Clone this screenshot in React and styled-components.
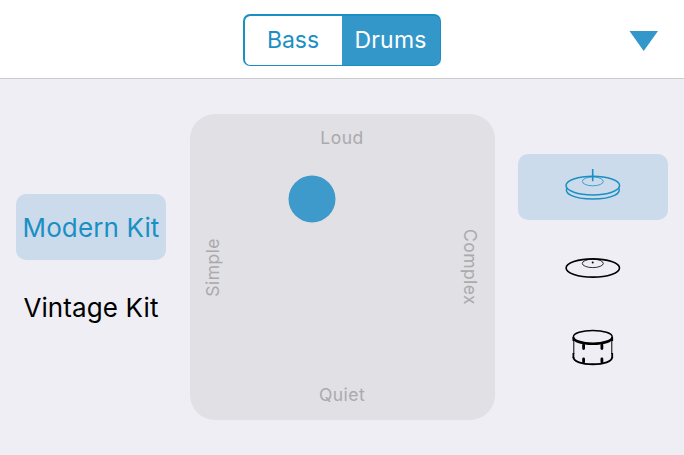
import React, { useState } from "react"
import styled, { createGlobalStyle, ThemeProvider } from "styled-components"

const theme = {
	accent: "#1a8fc4",
	accentFill: "#3398c9",
	selected: "#ccdbeb",
	surface: "#efeef4",
	pad: "#e1e0e5",
	label: "#aaaaad",
}

const GlobalStyle = createGlobalStyle`
	* {
		box-sizing: border-box;
	}
	body {
		margin: 0;
		font-family: Inter, "Liberation Sans", sans-serif;
	}
	button {
		border: 0;
		padding: 0;
		background: none;
		font: inherit;
		cursor: pointer;
	}
`

const AppWrapper = styled.div`
	display: flex;
	flex-direction: column;
	width: 100vw;
	height: 100vh;
	overflow: hidden;
	background: ${({ theme }) => theme.surface};
`

const Header = styled.header`
	display: grid;
	grid-template-columns: 1fr 198px 1fr;
	align-items: center;
	height: 79px;
	padding: 2px 25px 0;
	border-bottom: 1px solid #cccbd0;
	background: #fff;
`

const SegmentedControl = styled.div`
	display: grid;
	grid-column: 2;
	grid-template-columns: 97px 1fr;
	height: 52px;
	border-radius: 7px;
	background: ${({ theme }) => theme.accent};
	padding: 1.5px;
	overflow: hidden;
`

const Segment = styled.button`
	border-radius: ${({ $active }) => ($active ? "0 5.5px 5.5px 0" : "5.5px 0 0 5.5px")};
	font-size: 23px;
	line-height: 28px;
	letter-spacing: ${({ $spacing }) => $spacing};
	color: ${({ $active, theme }) => ($active ? "#fff" : theme.accent)};
	background: ${({ $active, theme }) => ($active ? theme.accentFill : "#fff")};
`

const CollapseButton = styled.button`
	display: flex;
	justify-self: end;
	padding-top: 1px;
`

const Content = styled.main`
	display: grid;
	flex: 1;
	grid-template-columns: 150px 305px 150px;
	justify-content: space-between;
	align-items: center;
	padding: 0 16px;
`

const OptionList = styled.div`
	display: flex;
	flex-direction: column;
	gap: 14px;
`

const Option = styled.button`
	display: flex;
	align-items: center;
	justify-content: center;
	height: 66px;
	border-radius: 10px;
	font-size: 26px;
	letter-spacing: ${({ $spacing }) => $spacing};
	white-space: nowrap;
	color: ${({ $active, theme }) => ($active ? theme.accent : "#000")};
	background: ${({ $active, theme }) => ($active ? theme.selected : "transparent")};
`

const Pad = styled.div`
	position: relative;
	display: grid;
	grid-template-rows: 48px 1fr 50px;
	grid-template-columns: 47px 1fr 50px;
	place-items: center;
	height: 306px;
	border-radius: 25px;
	background: ${({ theme }) => theme.pad};
`

const PadLabel = styled.span`
	grid-row: ${({ $row }) => $row};
	grid-column: ${({ $column }) => $column};
	font-size: 17.5px;
	line-height: 22px;
	letter-spacing: 0.45px;
	color: ${({ theme }) => theme.label};
	writing-mode: ${({ $vertical }) => ($vertical ? "vertical-rl" : "horizontal-tb")};
	transform: ${({ $flipped }) => ($flipped ? "rotate(180deg)" : "none")};
`

const Puck = styled.div`
	position: absolute;
	width: 47px;
	height: 47px;
	border-radius: 50%;
	background: #3d9aca;
	transform: translate(-50%, -50%);
`

const HiHatIcon = () => (
	<svg width="60" height="44" viewBox="0 0 60 44" fill="none" stroke="currentColor" strokeWidth="1.5">
		<ellipse cx="29.8" cy="20.6" rx="26.8" ry="9.3" />
		<path d="M3.800 23.200C1.500 28 9 34 29.800 34s28.300-6 26-10.800" />
		<ellipse cx="29.8" cy="16.4" rx="10.5" ry="4.4" strokeWidth="0.8" />
		<path d="M29.700 4v12.200" strokeWidth="1.600" />
	</svg>
)

const CymbalIcon = () => (
	<svg width="60" height="44" viewBox="0 0 60 44" fill="none" stroke="currentColor" strokeWidth="1.6">
		<ellipse cx="29.8" cy="23" rx="26.7" ry="9.1" />
		<ellipse cx="29.8" cy="18.4" rx="10.5" ry="4.2" strokeWidth="0.8" />
		<circle cx="29.7" cy="17.5" r="1" fill="currentColor" stroke="none" />
	</svg>
)

const SnareIcon = () => (
	<svg width="60" height="44" viewBox="0 0 60 44" fill="none" stroke="currentColor" strokeWidth="1.5">
		<ellipse cx="29.8" cy="11.8" rx="19.4" ry="6.400" />
		<path d="M10.400 12.500c0 4.200 8.500 6.700 19.400 6.700s19.400-2.500 19.400-6.700" strokeWidth="1.8" />
		<path d="M10.400 12v4M49.200 12v4M10.400 28v5M49.200 28v5" strokeWidth="1.8" />
		<path d="M10.800 15v14M48.800 15v14" strokeWidth="1" />
		<path d="M10.400 32c0 4.500 8.500 7.200 19.400 7.200s19.400-2.700 19.400-7.200" strokeWidth="1.9" />
		<path d="M20.600 20v3.500M38.900 20v3.500M20.600 34v3M38.900 34v3" strokeWidth="2.8" strokeLinecap="round" />
	</svg>
)

const segments = [
	{ name: "Bass", spacing: "0" },
	{ name: "Drums", spacing: "0.2px" },
]

const kits = [
	{ name: "Modern Kit", spacing: "0.12px" },
	{ name: "Vintage Kit", spacing: "0.12px" },
]

const pieces = [
	{ name: "Hi-hat", Icon: HiHatIcon },
	{ name: "Cymbal", Icon: CymbalIcon },
	{ name: "Snare", Icon: SnareIcon },
]

const App = () => {
	const [segment, setSegment] = useState("Drums")
	const [kit, setKit] = useState("Modern Kit")
	const [piece, setPiece] = useState("Hi-hat")
	const puck = { x: 122, y: 85 }

	return (
		<ThemeProvider theme={theme}>
			<GlobalStyle />
			<AppWrapper>
				<Header>
					<SegmentedControl>
						{segments.map(({ name, spacing }) => (
							<Segment key={name} $active={segment === name} $spacing={spacing} onClick={() => setSegment(name)}>
								{name}
							</Segment>
						))}
					</SegmentedControl>
					<CollapseButton>
						<svg width="30" height="20" viewBox="0 0 30 20">
							<path d="M0.500 0H29L14.700 20z" fill={theme.accentFill} />
						</svg>
					</CollapseButton>
				</Header>
				<Content>
					<OptionList>
						{kits.map(({ name, spacing }) => (
							<Option key={name} $active={kit === name} $spacing={spacing} onClick={() => setKit(name)}>
								{name}
							</Option>
						))}
					</OptionList>
					<Pad>
						<PadLabel $row={1} $column="1 / -1">Loud</PadLabel>
						<PadLabel $row="1 / -1" $column={1} $vertical $flipped>Simple</PadLabel>
						<PadLabel $row="1 / -1" $column={3} $vertical>Complex</PadLabel>
						<PadLabel $row={3} $column="1 / -1">Quiet</PadLabel>
						<Puck style={{ left: puck.x, top: puck.y }} />
					</Pad>
					<OptionList>
						{pieces.map(({ name, Icon }) => (
							<Option key={name} aria-label={name} $active={piece === name} onClick={() => setPiece(name)}>
								<Icon />
							</Option>
						))}
					</OptionList>
				</Content>
			</AppWrapper>
		</ThemeProvider>
	)
}

export default App
